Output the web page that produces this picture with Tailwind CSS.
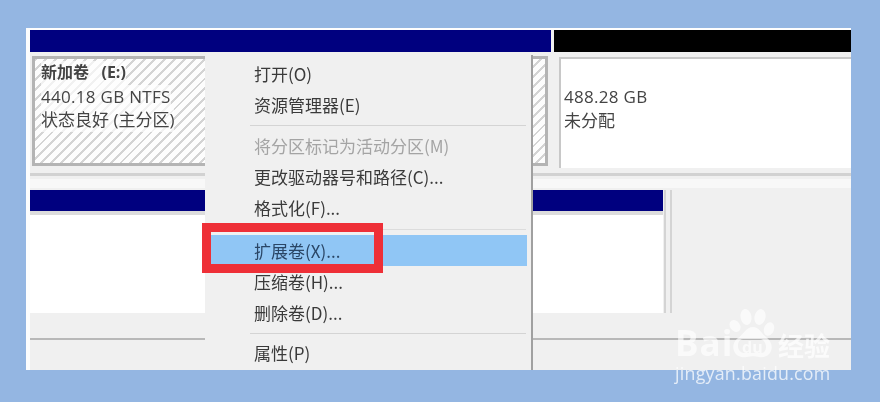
<!DOCTYPE html>
<html lang="zh">
<head>
<meta charset="utf-8">
<script src="https://cdn.jsdelivr.net/npm/@tailwindcss/browser@4"></script>
</head>
<body class="m-0 bg-[#94b6e2]">
<div class="relative w-[880px] h-[402px] overflow-hidden bg-[#94b6e2] pt-[28px] pl-[26px] font-['Open_Sans','Noto_Sans_CJK_SC',sans-serif] text-[#444] blur-[0.6px]">
  <!-- disk management window -->
  <div class="relative w-[825px] h-[342px] bg-[#f0f0f0] border-l-4 border-t-2 border-[#fdfdfd] flex flex-col">
    <!-- upper disk row -->
    <div class="flex gap-[3px] h-[140px]">
      <div class="w-[521px] flex flex-col">
        <div class="h-[22px] bg-[#00007f] shrink-0"></div>
        <div class="mt-[4px] ml-[2px] w-[516px] h-[110px] border-[3px] border-[#b4b4b4] bg-[repeating-linear-gradient(135deg,#d4d4d4_0,#d4d4d4_2px,#fdfdfd_2px,#fdfdfd_7px)] pl-[6px] pt-[2px] text-[17px] leading-[23.5px]">
          <div class="font-bold whitespace-pre bg-[#fdfdfd]/70 w-fit text-[16px]">新加卷   (E:)</div>
          <div class="whitespace-pre tracking-[0.3px] bg-[#fdfdfd]/70 w-fit">440.18 GB NTFS</div>
          <div class="whitespace-pre bg-[#fdfdfd]/70 w-fit">状态良好 (主分区)</div>
        </div>
      </div>
      <div class="flex-1 flex flex-col">
        <div class="h-[22px] bg-black shrink-0"></div>
        <div class="mt-[5px] ml-[5px] h-[111px] bg-white border-l-2 border-t-2 border-[#c8c8c8] pl-[3px] pt-[26px] text-[17px] leading-[24px]">
          <div class="tracking-[0.3px]">488.28 GB</div>
          <div>未分配</div>
        </div>
      </div>
    </div>
    <div class="mt-[3px] h-[3px] bg-[#d2d2d2] shrink-0"></div>
    <div class="mt-[3px] h-[9px] bg-[#f8f8f8] shrink-0"></div>
    <!-- lower disk row -->
    <div class="flex h-[123px] mt-[2px]">
      <div class="w-[633px] flex flex-col">
        <div class="h-[21px] bg-[#00007f] shrink-0"></div>
        <div class="h-[4px] bg-[#dcdcdc] shrink-0"></div>
        <div class="flex-1 bg-white"></div>
      </div>
      <div class="ml-[1px] w-[2px] bg-[#d4d4d4]"></div>
      <div class="ml-[4px] w-[2px] bg-[#d4d4d4]"></div>
    </div>
    <div class="h-[25px] shrink-0"></div>
    <div class="h-[2px] bg-[#b8b8b8] shrink-0"></div>
  </div>

  <!-- context menu -->
  <div class="absolute left-[205px] top-[55px] w-[328px] h-[315px] bg-[#f0f0f0] border-r-2 border-[#a0a0a0] pt-[4px] text-[17px] text-[#3a3a3a] font-['Noto_Sans_CJK_SC','Open_Sans',sans-serif]">
    <div class="h-[30px] leading-[30px] pl-[49px]">打开(O)</div>
    <div class="h-[31px] leading-[31px] pl-[49px]">资源管理器(E)</div>
    <div class="h-[10px] flex items-center ml-[45px] mr-[5px]"><div class="h-px w-full bg-[#d4d4d4]"></div></div>
    <div class="h-[31px] leading-[31px] pl-[49px] text-[#a4a4a4]">将分区标记为活动分区(M)</div>
    <div class="h-[31px] leading-[31px] pl-[49px]">更改驱动器号和路径(C)...</div>
    <div class="h-[32px] leading-[32px] pl-[49px]">格式化(F)...</div>
    <div class="h-[11px] flex items-center ml-[45px] mr-[5px]"><div class="h-px w-full bg-[#dcdcdc]"></div></div>
    <div class="h-[31px] leading-[31px] pl-[49px] mr-[4px] bg-[#90c6f5] text-[#2a4666]">扩展卷(X)...</div>
    <div class="h-[31px] leading-[31px] pl-[49px]">压缩卷(H)...</div>
    <div class="h-[31px] leading-[31px] pl-[49px]">删除卷(D)...</div>
    <div class="h-[10px] flex items-center ml-[45px] mr-[5px]"><div class="h-px w-full bg-[#d4d4d4]"></div></div>
    <div class="h-[30px] leading-[30px] pl-[49px]">属性(P)</div>
  </div>

  <!-- red annotation -->
  <div class="absolute left-[202px] top-[223px] w-[181px] h-[50px] border-[9px] border-[#ee2f37]"></div>
</div>

<!-- watermark -->
<div class="absolute left-[672px] top-[305px] w-[165px] h-[80px] blur-[0.4px]">
  <svg class="absolute left-[18px] top-0" width="122" height="60" viewBox="0 0 122 60" fill="#fff" fill-opacity="0.65">
    <ellipse cx="56" cy="12" rx="5.5" ry="8" transform="rotate(-10 56 12)"/>
    <ellipse cx="70" cy="12" rx="5.5" ry="8" transform="rotate(12 70 12)"/>
    <ellipse cx="45" cy="21" rx="5" ry="6.5" transform="rotate(-35 45 21)"/>
    <ellipse cx="79" cy="24" rx="5" ry="7" transform="rotate(20 79 24)"/>
    <path fill-rule="evenodd" d="M63 22c6 0 8 6 13 10 5 4 7 9 5 14-2 5-7 7-12 6-4-1-8-1-12 0-6 1-11-1-13-6-2-5 0-10 4-13 6-4 8-11 15-11zM53 34c-3 0-5 3-5 7s3 7 6 7h18c2 0 4-3 4-6s-2-8-6-8z"/>
  </svg>
  <div class="absolute left-[3px] top-[24px] text-[35px] leading-[28px] font-bold tracking-[1px] font-['Open_Sans',sans-serif] text-white/65">Bai</div>
  <div class="absolute left-[70px] top-[33px] text-[16px] leading-[18px] font-bold font-['Open_Sans',sans-serif] text-white/65">du</div>
  <div class="absolute left-[106px] top-[25px] text-[26px] leading-[30px] font-['Noto_Sans_CJK_SC',sans-serif] font-bold text-white/70">经验</div>
  <div class="absolute left-[3px] top-[58px] text-[17.8px] leading-[20px] tracking-[0.25px] font-['Open_Sans',sans-serif] text-white/75">jingyan.baidu.com</div>
</div>
</body>
</html>
